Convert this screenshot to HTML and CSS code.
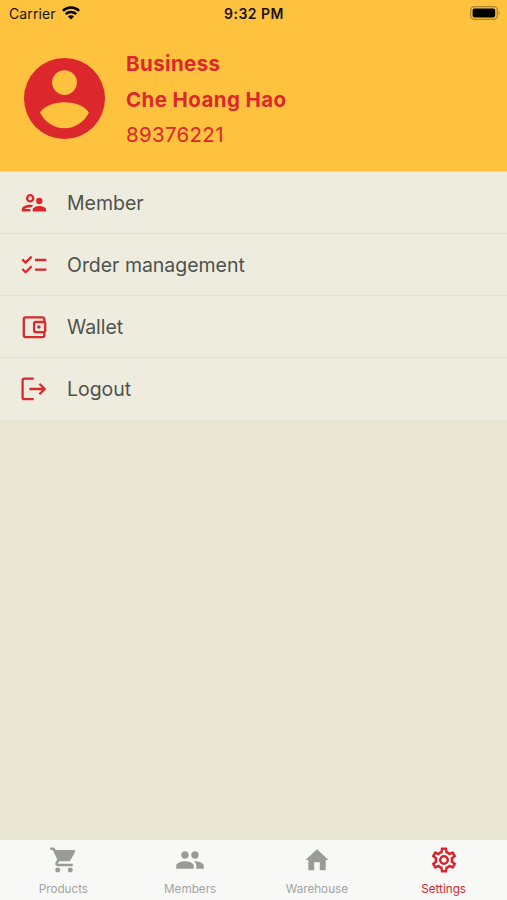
FILE: index.html
```html
<!DOCTYPE html>
<html lang="en">
<head>
<meta charset="utf-8">
<title>Settings</title>
<link rel="stylesheet" href="styles.css">
</head>
<body>
<header class="header">
  <div class="status">
    <div class="carrier"><span>Carrier</span>
      <svg class="wifi" viewBox="0 0 18 14"><g fill="none" stroke="currentColor" stroke-width="2.5"><path d="M.9 4.9a11.5 11.5 0 0 1 16.2 0"/><path d="M3.8 8.2a7.4 7.4 0 0 1 10.4 0"/></g><path fill="currentColor" d="M9 13.6 5.9 10.5a4.4 4.4 0 0 1 6.2 0z"/></svg>
    </div>
    <div class="time">9:32 PM</div>
    <div class="power">
      <svg class="battery" viewBox="0 0 31 14"><rect x=".7" y=".7" width="26.6" height="12.6" rx="3.6" fill="none" stroke="#ac842e" stroke-width="1.3"/><rect x="2.6" y="2.6" width="22.6" height="8.8" rx="1.8"/><path d="M28.6 4.7q2.3 2.3 0 4.6z" fill="#ac842e"/></svg>
    </div>
  </div>
  <div class="profile">
    <svg class="avatar" viewBox="0 0 81 81"><path fill="currentColor" fill-rule="evenodd" d="M40.5 0a40.5 40.5 0 1 0 0 81 40.5 40.5 0 0 0 0-81zM40.5 12.2a12.4 12.4 0 1 1 0 24.8 12.4 12.4 0 0 1 0-24.8zM16 54.5C20 48 30 44.2 40.5 44.2S61 48 65 54.5C60 64.5 51 70.2 40.5 70.2S21 64.5 16 54.5z"/></svg>
    <div class="details">
      <div class="line role">Business</div>
      <div class="line name">Che Hoang Hao</div>
      <div class="line phone">89376221</div>
    </div>
  </div>
</header>
<main class="menu">
  <div class="row">
    <svg class="icon" viewBox="0 0 28 28"><circle cx="10.2" cy="9.2" r="3.1" fill="none" stroke="currentColor" stroke-width="2.3"/><g fill="currentColor"><circle cx="19.3" cy="12" r="3.2"/><path d="M12.7 22.4v-2c0-2.300 4-3.500 6.700-3.500s6.700 1.200 6.700 3.500v2z"/><path d="M1.800 22.400v-2.200c0-2.900 5-4.500 8.400-4.400q1.700 0 3.200.5l-2.100 1.900c-3 0-6 1-6.800 1.900h6.300q-.5 1-.5 2.300z"/></g></svg>
    <span class="label">Member</span>
  </div>
  <div class="row">
    <svg class="icon stroked" viewBox="0 0 28 28"><path d="m2.400 8.400 3.200 3.200 6-6M2.400 18l3.200 3.200 6-6M15 9h11.300M15 18.700h11.300"/></svg>
    <span class="label">Order management</span>
  </div>
  <div class="row">
    <svg class="icon stroked" viewBox="0 0 28 28"><path d="M24.300 9V6.100q0-1.800-1.800-1.800H5.600q-1.800 0-1.800 1.800v16.200q0 1.800 1.800 1.800h16.900q1.800 0 1.800-1.800v-2.900"/><rect x="14.1" y="9" width="11.1" height="10.1" rx="1.6"/><circle cx="18.9" cy="14" r="1.8" fill="currentColor" stroke="none"/></svg>
    <span class="label">Wallet</span>
  </div>
  <div class="row">
    <svg class="icon stroked" viewBox="0 0 28 28"><path d="M13.700 3.700H4.400q-1.800 0-1.800 1.800v16.900q0 1.800 1.800 1.800h9.300M9.300 14H25M19.400 8.700l5.400 5.300-5.400 5.300"/></svg>
    <span class="label">Logout</span>
  </div>
</main>
<nav class="tabs">
  <div class="tab">
    <svg class="tab-icon cart" viewBox="0 0 24 24"><path fill="currentColor" d="M7 18c-1.100 0-1.990.9-1.990 2S5.900 22 7 22s2-.9 2-2-.9-2-2-2zM1 2v2h2l3.600 7.590-1.350 2.450c-.16.28-.25.61-.25.96 0 1.100.9 2 2 2h12v-2H7.420c-.14 0-.25-.11-.25-.25l.03-.12.9-1.630h7.450c.75 0 1.410-.41 1.750-1.030l3.580-6.490A1 1 0 0 0 20 4H5.210l-.94-2H1zm16 16c-1.100 0-1.990.9-1.990 2s.89 2 1.990 2 2-.9 2-2-.9-2-2-2z"/></svg>
    <span class="tab-label">Products</span>
  </div>
  <div class="tab">
    <svg class="tab-icon" viewBox="0 0 24 24"><path fill="currentColor" d="M16 11c1.660 0 2.990-1.340 2.990-3S17.660 5 16 5s-3 1.340-3 3 1.340 3 3 3zm-8 0c1.660 0 2.990-1.340 2.990-3S9.660 5 8 5 5 6.340 5 8s1.340 3 3 3zm0 2c-2.330 0-7 1.170-7 3.500V19h14v-2.500C15 14.170 10.330 13 8 13zm8 0c-.29 0-.62.02-.97.05 1.160.84 1.970 1.970 1.970 3.450V19h6v-2.500c0-2.330-4.670-3.500-7-3.500z"/></svg>
    <span class="tab-label">Members</span>
  </div>
  <div class="tab">
    <svg class="tab-icon" viewBox="0 0 30 30"><path fill="currentColor" d="M15 4.300 26.500 15h-2.800v10.200h-5.900v-8h-5.600v8H6.300V15H3.500z"/></svg>
    <span class="tab-label">Warehouse</span>
  </div>
  <div class="tab active">
    <svg class="tab-icon" viewBox="0 0 24 24"><path fill="currentColor" d="M12 8a4 4 0 0 1 4 4 4 4 0 0 1-4 4 4 4 0 0 1-4-4 4 4 0 0 1 4-4m0 2a2 2 0 0 0-2 2 2 2 0 0 0 2 2 2 2 0 0 0 2-2 2 2 0 0 0-2-2m-2 12c-.25 0-.46-.18-.5-.42l-.37-2.650c-.63-.25-1.170-.59-1.690-.99l-2.490 1.010c-.22.08-.49 0-.61-.22l-2-3.460c-.13-.22-.07-.49.12-.64l2.110-1.660L4.500 12l.07-1-2.110-1.630c-.19-.15-.25-.42-.12-.64l2-3.460c.12-.22.39-.31.61-.22l2.490 1c.52-.39 1.060-.73 1.690-.98l.37-2.650c.04-.24.25-.42.5-.42h4c.25 0 .46.18.5.42l.37 2.650c.63.25 1.170.59 1.690.98l2.490-1c.22-.09.49 0 .61.22l2 3.460c.13.22.07.49-.12.64L19.430 11l.07 1-.07 1 2.110 1.630c.19.15.25.42.12.64l-2 3.460c-.12.22-.39.31-.61.22l-2.490-1c-.52.39-1.060.73-1.690.98l-.37 2.650c-.04.24-.25.42-.5.42h-4m1.250-18-.37 2.610c-1.200.25-2.260.89-3.030 1.780L5.440 7.350l-.75 1.300L6.800 10.200a6.500 6.500 0 0 0 0 3.600l-2.120 1.560.75 1.300 2.430-1.040c.77.88 1.820 1.520 3.010 1.760l.37 2.620h1.520l.37-2.610c1.190-.25 2.240-.89 3.010-1.770l2.430 1.040.75-1.300-2.120-1.550c.4-1.170.4-2.440 0-3.610l2.110-1.550-.75-1.300-2.410 1.040a5.420 5.420 0 0 0-3.030-1.770L12.750 4h-1.500z"/></svg>
    <span class="tab-label">Settings</span>
  </div>
</nav>
</body>
</html>
```
FILE: styles.css
```css
* { box-sizing: border-box; }

body {
  margin: 0;
  height: 900px;
  display: flex;
  flex-direction: column;
  background: #e9e6d3;
  font-family: Inter, "Liberation Sans", sans-serif;
  overflow: hidden;
}

svg { display: block; flex: none; }

.header {
  height: 172px;
  background: #ffc23e;
  border-bottom: 1px solid #f8d98c;
  color: #dc282c;
}

.status {
  height: 27px;
  display: grid;
  grid-template-columns: 1fr auto 1fr;
  align-items: center;
  padding: 0 6px 0 9px;
  color: #17130a;
  font-size: 14px;
}

.carrier { display: flex; align-items: center; gap: 6px; letter-spacing: 0.1px; }
.wifi { width: 18px; height: 14px; margin-top: -2px; color: #000; }
.time { font-weight: 600; letter-spacing: 0.5px; margin-right: 2px; }
.power { display: flex; justify-content: flex-end; }
.battery { width: 31px; height: 14px; margin-top: -1px; }

.profile { display: flex; gap: 21px; padding: 18px 24px 0; }
.avatar { width: 81px; height: 81px; margin-top: 13px; }
.details { display: flex; flex-direction: column; }
.line { height: 35.5px; line-height: 38px; font-size: 20.5px; white-space: nowrap; }
.role, .name { font-weight: 650; letter-spacing: 0.4px; }
.phone { letter-spacing: 0.3px; }

.row {
  height: 62px;
  display: flex;
  align-items: center;
  gap: 19px;
  padding-left: 20px;
  background: #eeecdf;
  border-bottom: 1px solid #e3e1d3;
}
.row:last-child { border-bottom-color: #eeecdf; }
.icon { width: 28px; height: 28px; color: #dc282c; }
.stroked { fill: none; stroke: currentColor; stroke-width: 2.3; stroke-linejoin: round; }
.label { font-size: 19.5px; color: #50524c; letter-spacing: -0.03px; white-space: nowrap; }

.tabs {
  margin-top: auto;
  height: 60px;
  display: flex;
  background: #f8f8f6;
}
.tab {
  flex: 1;
  display: flex;
  flex-direction: column;
  align-items: center;
  padding-top: 5px;
  color: #999b98;
}
.tab-icon { width: 30px; height: 30px; }
.cart { margin-left: 2px; }
.tab-label { margin-top: 7px; font-size: 11.7px; line-height: 15px; color: #a3a4a2; }
.active, .active .tab-label { color: #d5282d; }
```
